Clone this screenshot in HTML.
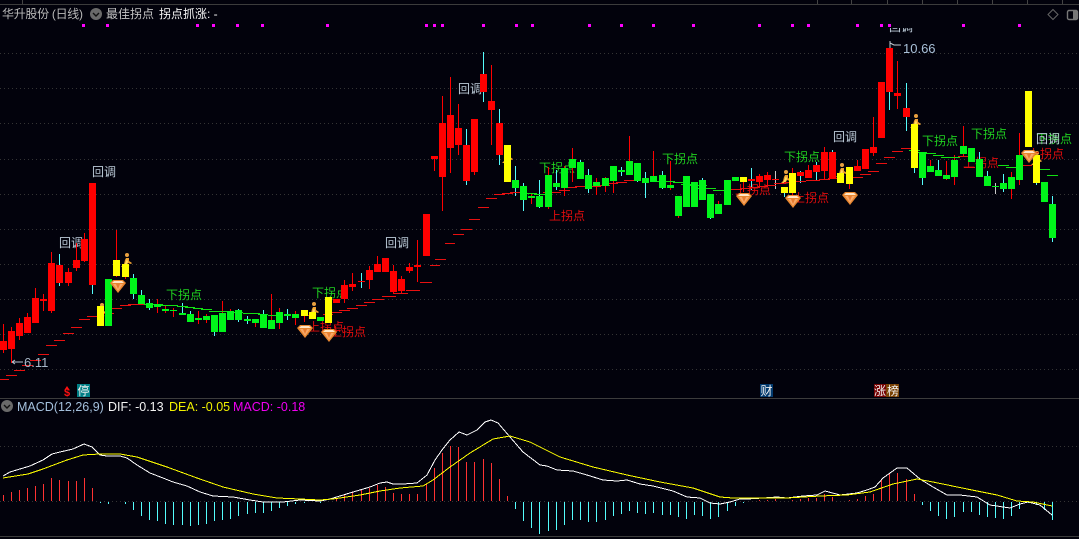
<!DOCTYPE html>
<html lang="zh">
<head>
<meta charset="utf-8">
<title>华升股份 (日线)</title>
<style>
html,body{margin:0;padding:0;background:#02020c;width:1079px;height:539px;overflow:hidden}
svg{display:block;position:absolute;left:0;top:0}
text{font-family:"Liberation Sans","Noto Sans CJK SC",sans-serif;font-size:12px}
.g{fill:#20d020}.r{fill:#e00c0c}.h{fill:#bccbd8}
.m{font-size:12.5px}.n{font-size:13px}
</style>
</head>
<body>
<svg width="1079" height="539" viewBox="0 0 1079 539" xmlns="http://www.w3.org/2000/svg">
<defs>
<clipPath id="top"><rect x="880" y="28" width="50" height="10"/></clipPath>
<g id="gem">
<polygon points="0,3 3,0 13,0 16,3 8,13" fill="#e8862e"/>
<polygon points="3,4 13,4 8,11" fill="#f8a868"/>
<polygon points="6,4 10,4 8,9" fill="#e87c30"/>
<polygon points="4,1 12,1 14,3 2,3" fill="#ffe4c4"/>
</g>
<g id="man">
<circle cx="1" cy="1" r="2" fill="#e8a040"/>
<path d="M0 4L3 4L3 7L6 9L5 10L2 9L1 11L4 12L-3 13L-5 13L-2 10L-1 6Z" fill="#f0a030"/>
<path d="M1 5L2 8L0 11L-2 12Z" fill="#ffe060"/>
</g>
</defs>

<g shape-rendering="crispEdges">
<path d="M0 4.5H1079" stroke="#3c3c3c"/>
<path d="M22.5 0V4M817.5 0V4M851.5 0V4M887.5 0V4M922.5 0V4M957.5 0V4M992.5 0V4M1027.5 0V4M1062.5 0V4" stroke="#444"/>
<path d="M0 398.5H1079M0 536.5H1079" stroke="#3c3c3c"/>
<path d="M0 53.5H1079M0 88.5H1079M0 123.5H1079M0 159.5H1079M0 194.5H1079M0 229.5H1079M0 264.5H1079M0 299.5H1079M0 334.5H1079M0 369.5H1079M0 446.5H1079M0 501.5H1079" stroke="#343434" stroke-dasharray="1 3"/>
<path d="M82 25.5h3M106 25.5h3M196 25.5h3M212 25.5h3M236 25.5h3M261 25.5h3M326 25.5h3M425 25.5h3M433 25.5h3M441 25.5h3M482 25.5h3M515 25.5h3M531 25.5h3M588 25.5h3M620 25.5h3M652 25.5h3M692 25.5h3M758 25.5h3M791 25.5h3M807 25.5h3M856 25.5h3M880 25.5h3M888 25.5h3M962 25.5h3M1018 25.5h3" stroke="#ff00ff" stroke-width="3"/>
</g>

<!-- header -->
<text x="2" y="18" fill="#b8b8b8" textLength="81" lengthAdjust="spacing">华升股份 (日线)</text>
<circle cx="96" cy="14" r="6" fill="#6a6a6a"/>
<path d="M93 13l3 3 3-3" fill="none" stroke="#111" stroke-width="1.4"/>
<text x="106" y="18" fill="#c4c4c4">最佳拐点</text>
<text x="159" y="18" fill="#f4f4f4">拐点抓涨: -</text>
<path d="M1053 9.5l5 5-5 5-5-5z" fill="none" stroke="#666"/>
<rect x="1067.5" y="10.5" width="10" height="9" rx="1.5" fill="none" stroke="#777" stroke-width="1.4"/>
<rect x="1073" y="11" width="4" height="8" fill="#777"/>

<!-- persons behind candles -->
<use href="#man" x="126" y="254"/>
<use href="#man" x="101" y="304"/>
<use href="#man" x="313" y="303"/>
<use href="#man" x="507" y="150"/>
<use href="#man" x="785" y="171"/>
<use href="#man" x="841" y="164"/>
<use href="#man" x="915" y="115"/>
<use href="#man" x="1036" y="152"/>

<!-- labels -->
<text x="92" y="176" class="h">回调</text>
<text x="59" y="247" class="h">回调</text>
<text x="385" y="247" class="h">回调</text>
<text x="458" y="93" class="h">回调</text>
<text x="833" y="141" class="h">回调</text>
<text x="889" y="31" class="h" clip-path="url(#top)">回调</text>

<text x="166" y="299" class="g">下拐点</text>
<text x="312" y="297" class="g">下拐点</text>
<text x="539" y="172" class="g">下拐点</text>
<text x="662" y="163" class="g">下拐点</text>
<text x="784" y="161" class="g">下拐点</text>
<text x="922" y="145" class="g">下拐点</text>
<text x="971" y="138" class="g">下拐点</text>
<text x="1036" y="143" class="g">下拐点</text>

<text x="308" y="331" class="r">上拐点</text>
<text x="330" y="336" class="r">上拐点</text>
<text x="549" y="220" class="r">上拐点</text>
<text x="735" y="194" class="r">上拐点</text>
<text x="793" y="202" class="r">上拐点</text>
<text x="963" y="167" class="r">上拐点</text>
<text x="1028" y="158" class="r">上拐点</text>
<text x="1036" y="143" class="h">回调</text>

<g shape-rendering="crispEdges" fill="none">
<!-- red wicks -->
<path stroke="#ff0000" d="M3.5 324V353M11.5 327V363M19.5 318V340M27.5 313V333M35.5 288V323M43.5 294V311M51.5 252V313M68.5 268V286M76.5 243V271M84.5 233V262M116.5 230V277M125.5 264V279M157.5 299V313M165.5 306V313M173.5 308V317M198.5 311V324M206.5 314V323M222.5 301V332M230.5 309V320M255.5 319V327M271.5 294V329M279.5 308V329M295.5 311V325M304.5 310V322M344.5 280V303M352.5 273V291M369.5 266V289M377.5 256V272M393.5 265V294M401.5 276V293M409.5 263V273M417.5 240V282M434.5 159V171M442.5 96V211M450.5 77V173M458.5 104V155M474.5 172V175M491.5 65V145M531.5 193V204M548.5 167V209M564.5 166V196M572.5 148V182M596.5 178V195M605.5 177V192M613.5 166V193M629.5 136V175M653.5 151V182M670.5 161V190M678.5 216V218M718.5 201V214M743.5 177V192M759.5 174V186M767.5 172V185M792.5 168V197M808.5 165V178M824.5 147V180M849.5 167V189M857.5 160V171M873.5 117V156M897.5 61V109M930.5 160V172M946.5 161V180M954.5 155V185M963.5 126V156M1011.5 172V199M1019.5 133V185"/>
<!-- cyan wicks -->
<path stroke="#54fcfc" d="M59.5 254V286M92.5 285V294M133.5 274V299M141.5 290V295M149.5 299V310M182.5 303V315M190.5 311V322M214.5 332V336M238.5 309V322M247.5 316V324M263.5 310V328M287.5 309V320M361.5 273V288M466.5 129V185M483.5 52V102M499.5 109V165M515.5 166V196M523.5 183V211M539.5 180V208M556.5 170V190M580.5 160V179M588.5 169V193M621.5 167V176M637.5 181V182M645.5 172V198M662.5 171V189M702.5 178V200M710.5 218V219M751.5 168V190M784.5 193V197M800.5 171V183M816.5 162V180M832.5 150V152M889.5 92V110M906.5 83V131M914.5 168V173M922.5 178V185M938.5 160V176M979.5 152V159M987.5 171V176M1003.5 174V192M1036.5 183V185M1052.5 196V242"/>
<path stroke="#c8c8c8" d="M775.5 171V189M995.5 183V194"/>

<!-- step lines -->
<path stroke="#e81010" d="M0 379.5H9M6 375.5H17M14 370.5H25M22 365.5H33M30 360.5H41M38 354.5H49M46 345.5H57M54 340.5H65M63 333.5H74M71 327.5H82M79 319.5H90M87 316.5H98M104 313.5H114M112 308.5H122M120 305.5H131M128 304.5H144M304 315.5H312M323 314.5H333M332 312.5H342M339 310.5H350M347 308.5H358M356 305.5H367M364 302.5H375M372 299.5H384M382 296.5H396M394 293.5H408M406 290.5H420M420 282.5H432M430 265.5H440M435 259.5H446M445 243.5H455M453 234.5H464M461 229.5H472M469 219.5H480M478 207.5H489M486 198.5H497M494 194.5H505M502 193.5H513M510 192.5H520M543 192.5H553M551 192.5H561M559 190.5H570M567 187.5H577M575 186.5H585M583 186.5H593M591 186.5H601M600 185.5H610M609 183.5H618M616 182.5H627M624 180.5H635M731 189.5H742M740 188.5H752M750 187.5H760M758 186.5H768M766 185.5H776M774 183.5H786M784 182.5H796M796 181.5H806M806 180.5H820M819 179.5H830M828 178.5H840M851 177.5H863M860 174.5H871M868 171.5H879M876 163.5H887M884 157.5H895M892 151.5H903M901 148.5H912M958 156.5H968M964 167.5H975M1017 165.5H1032"/>
<path stroke="#12e012" d="M144 304.5H155M153 304.5H163M161 305.5H178M177 306.5H188M185 307.5H195M193 308.5H203M201 309.5H212M209 311.5H233M233 312.5H243M243 313.5H260M258 314.5H268M268 315.5H277M527 193.5H537M534 194.5H547M655 181.5H675M673 182.5H683M681 184.5H693M690 185.5H707M697 188.5H716M713 190.5H725M909 150.5H920M917 152.5H927M925 153.5H936M933 155.5H944M941 157.5H960M998 165.5H1009M1006 167.5H1017M1040 169.5H1050M1047 175.5H1058"/>

<!-- bodies -->
<path stroke="#ff0000" stroke-width="7" d="M3.5 341V350M11.5 331V349M19.5 323V336M27.5 317V333M35.5 298V323M43.5 299V301M51.5 263V311M59.5 265V283M68.5 272V283M76.5 260V268M84.5 239V261M92.5 183V285M336.5 299V303M344.5 285V299M352.5 284V287M361.5 281V282M369.5 270V280M377.5 264V272M385.5 258V272M393.5 271V292M401.5 279V291M409.5 267V271M417.5 265V267M426.5 214V256M434.5 156V159M442.5 123V177M450.5 115V148M458.5 128V145M466.5 145V181M474.5 119V172M483.5 74V92M491.5 101V110M499.5 123V155M751.5 179V181M759.5 176V182M767.5 175V180M775.5 179V180M800.5 172V176M808.5 170V178M816.5 165V172M824.5 152V171M832.5 152V179M857.5 166V171M865.5 149V169M873.5 147V153M881.5 82V138M889.5 48V92M897.5 93V96M906.5 108V117"/>
<path stroke="#00f51a" stroke-width="7" d="M108.5 279V326M133.5 278V294M141.5 295V304M149.5 303V308M157.5 304V307M165.5 309V311M173.5 310V311M182.5 313V315M190.5 314V322M198.5 318V320M206.5 316V320M214.5 315V332M222.5 313V332M230.5 311V320M238.5 310V320M247.5 319V321M255.5 319V323M263.5 314V328M271.5 320V329M279.5 312V323M287.5 314V316M295.5 314V318M320.5 317V321M515.5 180V188M523.5 186V200M531.5 196V198M539.5 196V207M548.5 175V207M556.5 183V187M564.5 168V188M572.5 159V168M580.5 162V179M588.5 175V189M596.5 182V186M605.5 178V186M613.5 166V181M621.5 170V172M629.5 161V175M637.5 163V181M645.5 178V183M653.5 176V182M662.5 175V188M670.5 185V188M678.5 196V216M686.5 176V207M694.5 182V207M702.5 180V200M710.5 194V218M718.5 204V214M727.5 180V205M735.5 177V181M922.5 152V178M930.5 166V172M938.5 170V176M946.5 175V179M954.5 160V177M963.5 146V154M971.5 148V162M979.5 159V177M987.5 176V186M995.5 186V187M1003.5 183V189M1011.5 177V189M1019.5 155V180M1044.5 182V202M1052.5 204V238"/>
<path stroke="#ffff00" stroke-width="7" d="M100.5 306V326M116.5 260V276M125.5 264V277M304.5 310V316M312.5 312V319M328.5 297V323M507.5 145V182M743.5 177V182M784.5 187V193M792.5 173V193M840.5 173V183M849.5 167V184M914.5 124V168M1028.5 91V147M1036.5 155V183"/>
</g>

<!-- gems -->
<use href="#gem" x="110" y="280"/>
<use href="#gem" x="297" y="325"/>
<use href="#gem" x="321" y="329"/>
<use href="#gem" x="736" y="193"/>
<use href="#gem" x="785" y="195"/>
<use href="#gem" x="842" y="192"/>
<use href="#gem" x="1021" y="150"/>

<!-- high/low -->
<path d="M12 362H23M12 362l3-2M12 362l3 2" stroke="#b8c4d0" fill="none"/>
<text x="24" y="367" fill="#a8b8c8" class="n">6.11</text>
<path d="M890 43l4 2h7M890 41v7" stroke="#c0c8d0" fill="none"/>
<text x="903" y="53" fill="#a8c0d8" class="n">10.66</text>

<!-- event markers -->
<text x="64" y="396" fill="#ff1010" style="font-weight:bold;font-size:11px">$</text>
<path d="M67 386l-2 3h4z" fill="#ff1010"/>
<rect x="77" y="384" width="13" height="13" fill="#007f86"/>
<text x="77.5" y="395" fill="#f0f0f0">停</text>
<rect x="760" y="384" width="13" height="13" fill="#023a6e"/>
<text x="760.5" y="395" fill="#f0f0f0">财</text>
<rect x="874" y="384" width="12" height="13" fill="#760404"/>
<text x="874" y="395" fill="#f0f0f0">涨</text>
<rect x="886" y="384" width="13" height="13" fill="#7a4204"/>
<text x="887" y="395" fill="#f0f0f0">榜</text>

<!-- MACD header -->
<circle cx="7" cy="406" r="6" fill="#6a6a6a"/>
<path d="M4 405l3 3 3-3" fill="none" stroke="#111" stroke-width="1.4"/>
<text x="17" y="411" fill="#a4c0dc" class="m">MACD(12,26,9)</text>
<text x="108" y="411" fill="#f4f4f4" class="m">DIF: -0.13</text>
<text x="169" y="411" fill="#f0f000" class="m">DEA: -0.05</text>
<text x="233" y="411" fill="#f000f0" class="m">MACD: -0.18</text>

<!-- MACD bars -->
<g shape-rendering="crispEdges" fill="none">
<path stroke="#ff3232" d="M3.5 501V495M11.5 501V492M19.5 501V490M27.5 501V488M35.5 501V486M43.5 501V484M51.5 501V478M59.5 501V480M68.5 501V481M76.5 501V481M84.5 501V478M92.5 501V488M336.5 501V498M344.5 501V494M352.5 501V492M361.5 501V490M369.5 501V488M377.5 501V485M385.5 501V487M393.5 501V493M401.5 501V494M409.5 501V494M417.5 501V494M426.5 501V484M434.5 501V468M442.5 501V453M450.5 501V446M458.5 501V447M466.5 501V462M474.5 501V462M483.5 501V459M491.5 501V463M499.5 501V479M507.5 501V496M759.5 501V500M767.5 501V500M775.5 501V499M792.5 501V500M800.5 501V499M808.5 501V498M816.5 501V498M824.5 501V494M832.5 501V497M849.5 501V500M857.5 501V499M865.5 501V496M873.5 501V494M881.5 501V479M889.5 501V474M897.5 501V473M906.5 501V479M914.5 501V494"/>
<path stroke="#54fcfc" d="M100.5 502V503M108.5 502V504M125.5 502V504M133.5 502V510M141.5 502V516M149.5 502V520M157.5 502V521M165.5 502V524M173.5 502V525M182.5 502V525M190.5 502V526M198.5 502V525M206.5 502V524M214.5 502V521M222.5 502V520M230.5 502V519M238.5 502V516M247.5 502V514M255.5 502V513M263.5 502V513M271.5 502V511M279.5 502V508M287.5 502V506M295.5 502V504M304.5 502V503M320.5 502V503M515.5 502V509M523.5 502V521M531.5 502V528M539.5 502V534M548.5 502V531M556.5 502V530M564.5 502V525M572.5 502V520M580.5 502V520M588.5 502V522M596.5 502V522M605.5 502V520M613.5 502V516M621.5 502V514M629.5 502V511M637.5 502V513M645.5 502V514M653.5 502V513M662.5 502V515M670.5 502V515M678.5 502V517M686.5 502V519M694.5 502V515M702.5 502V516M710.5 502V519M718.5 502V517M727.5 502V511M735.5 502V506M743.5 502V503M922.5 502V505M930.5 502V511M938.5 502V516M946.5 502V519M954.5 502V517M963.5 502V512M971.5 502V512M979.5 502V515M987.5 502V517M995.5 502V518M1003.5 502V519M1011.5 502V516M1019.5 502V509M1028.5 502V503M1036.5 502V505M1044.5 502V510M1052.5 502V520"/>
</g>

<!-- MACD lines -->
<polyline fill="none" shape-rendering="crispEdges" stroke="#ffffff" stroke-width="1" points="3,476 10,472 20,469 30,466 43,460 52,454 60,452 73,449 84,444 92,447 100,455 107,456 120,456 127,458 137,465 150,473 163,478 173,482 187,486 200,492 213,496 233,497 250,500 263,502 283,502 300,500 320,501 330,499 340,496 353,492 360,490 370,487 380,483 387,482 393,484 403,484 417,483 427,475 435,460 442,450 450,440 459,432 467,435 477,430 485,422 491,420 498,423 510,437 523,452 540,465 547,466 557,470 573,471 587,475 603,480 617,481 627,480 640,484 653,486 673,491 687,497 700,498 710,503 720,504 730,502 740,499 747,499 763,498 777,497 787,498 803,496 817,495 825,491 840,495 857,493 867,490 875,487 883,478 897,468 907,468 920,479 933,487 947,495 960,495 977,497 990,505 1010,508 1020,504 1028,502 1040,505 1052,515"/>
<polyline fill="none" shape-rendering="crispEdges" stroke="#ffff00" stroke-width="1" points="3,478 28,474 43,469 67,460 83,455 100,454 120,454 137,457 167,467 197,478 223,487 253,494 277,498 300,499 320,500 333,499 360,495 380,491 400,488 423,486 433,480 450,467 470,453 493,439 510,436 530,442 560,457 593,467 627,475 660,482 693,488 720,497 733,498 787,498 820,496 847,495 870,492 893,484 917,479 933,482 967,489 997,495 1017,501 1033,502 1052,506"/>
</svg>
</body>
</html>
